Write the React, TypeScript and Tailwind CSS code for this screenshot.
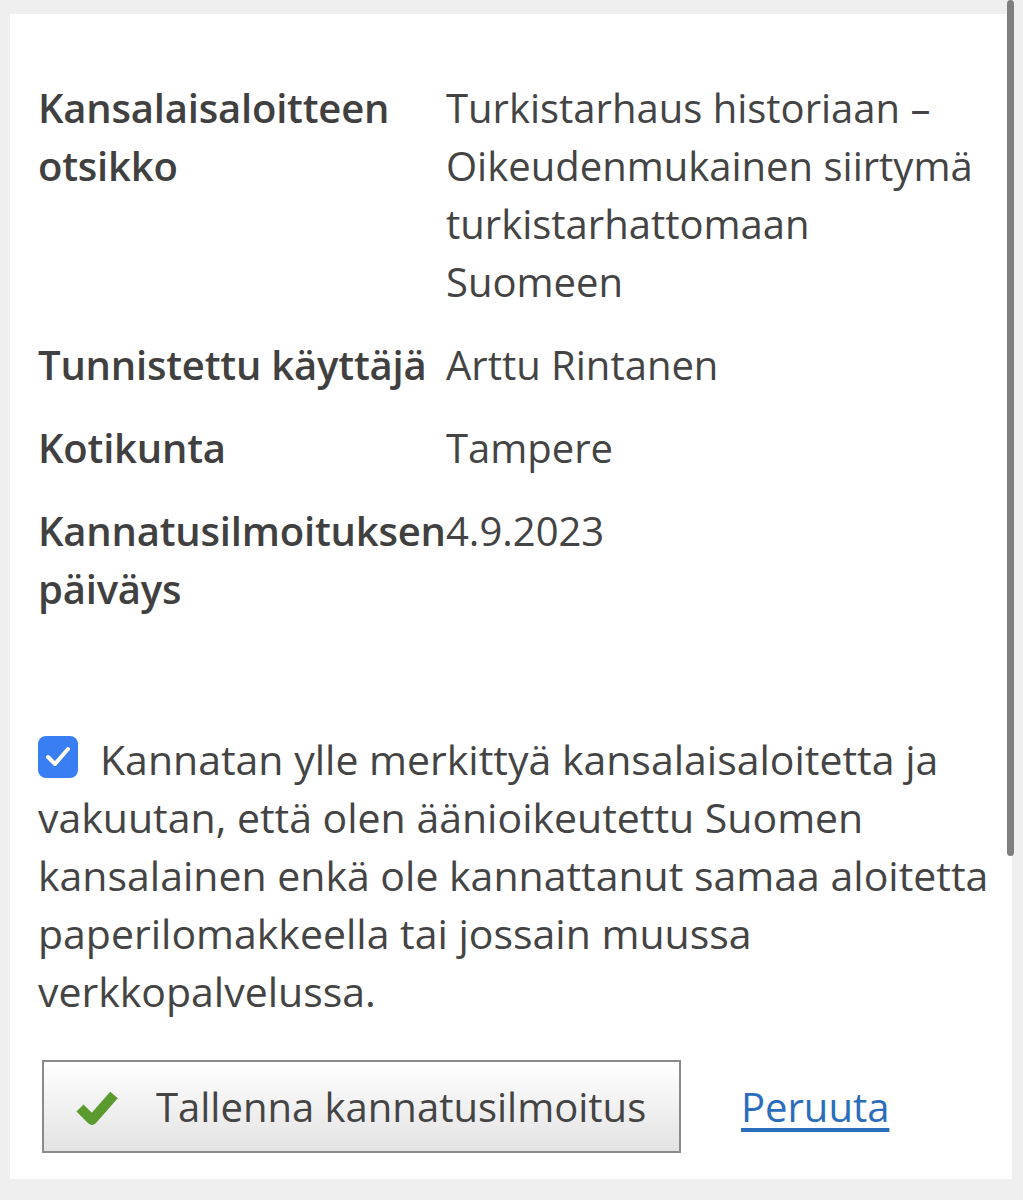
import React from 'react';

const rows: { label: string; value: string }[] = [
  {
    label: 'Kansalaisaloitteen otsikko',
    value: 'Turkistarhaus historiaan – Oikeudenmukainen siirtymä turkistarhattomaan Suomeen',
  },
  { label: 'Tunnistettu käyttäjä', value: 'Arttu Rintanen' },
  { label: 'Kotikunta', value: 'Tampere' },
  { label: 'Kannatusilmoituksen päiväys', value: '4.9.2023' },
];

const CheckMark = () => (
  <svg width="46" height="40" viewBox="0 0 46 40" aria-hidden="true">
    <polyline
      points="6,21 18,33 40,8"
      fill="none"
      stroke="#5b9a2c"
      strokeWidth="10"
      strokeLinejoin="round"
    />
  </svg>
);

const Checkbox = () => (
  <span className="mr-[22px] inline-flex h-[42px] w-[40px] -translate-y-[7px] items-center justify-center rounded-[8px] bg-[#3a7ef4] align-middle">
    <svg width="26" height="22" viewBox="0 0 26 22" aria-hidden="true">
      <polyline
        points="3,11 10,18 23,3"
        fill="none"
        stroke="white"
        strokeWidth="4"
        strokeLinecap="round"
        strokeLinejoin="round"
      />
    </svg>
  </span>
);

const App = () => {
  return (
    <div className="min-h-[1200px] w-full bg-[#efefef] pt-[14px] pl-[10px] pr-[11px] font-['Open_Sans',sans-serif] text-[#444]">
      <div className="relative bg-white pl-[28px] pr-[26px] pt-[52px] pb-[26px]">
        <div className="grid grid-cols-[408px_1fr] text-[40px] leading-[58px]">
          {rows.map((row) => (
            <React.Fragment key={row.label}>
              <div className="py-[12.5px] font-semibold tracking-[-0.2px] text-[#404040]">
                {row.label}
              </div>
              <div className="py-[12.5px]">{row.value}</div>
            </React.Fragment>
          ))}
        </div>

        <p className="-mr-[24px] mt-[100px] text-[41px] leading-[58px]">
          <Checkbox />
          Kannatan ylle merkittyä kansalaisaloitetta ja vakuutan, että olen äänioikeutettu Suomen
          kansalainen enkä ole kannattanut samaa aloitetta paperilomakkeella tai jossain muussa
          verkkopalvelussa.
        </p>

        <div className="mt-[40px] flex items-center pl-[4px]">
          <button
            type="button"
            className="flex h-[93px] w-[639px] items-center border-2 border-[#8a8a8a] bg-gradient-to-b from-white to-[#e3e3e3] pl-[30px] text-[40px] text-[#444]"
          >
            <CheckMark />
            <span className="ml-[36px]">Tallenna kannatusilmoitus</span>
          </button>
          <a href="#" className="ml-[60px] text-[40px] text-[#2a6ebb] underline underline-offset-[6px]">
            Peruuta
          </a>
        </div>
      </div>
      <div className="fixed right-[9px] top-0 h-[856px] w-[7px] rounded-full bg-[#7f7f7f]" />
    </div>
  );
};

export default App;
